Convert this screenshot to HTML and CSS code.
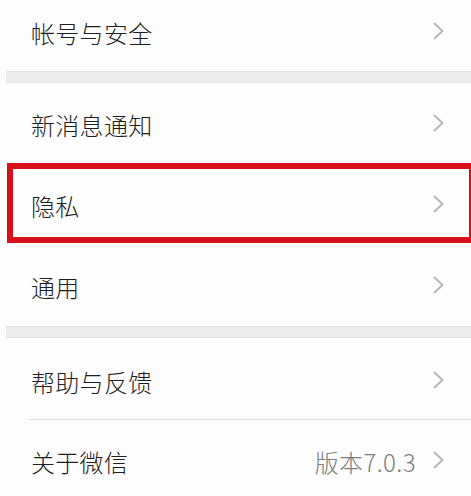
FILE: index.html
```html
<!DOCTYPE html>
<html lang="zh-CN">
<head>
<meta charset="utf-8">
<link rel="stylesheet" href="styles.css">
</head>
<body>
<div class="page">
  <div class="group">
    <div class="row first">
      <span class="label">帐号与安全</span>
      <span class="right"><svg class="chev" viewBox="0 0 11 18"><path d="M1.5 1.5 L9.5 9 L1.5 16.5"/></svg></span>
    </div>
  </div>
  <div class="gap"></div>
  <div class="group">
    <div class="row">
      <span class="label">新消息通知</span>
      <span class="right"><svg class="chev" viewBox="0 0 11 18"><path d="M1.5 1.5 L9.5 9 L1.5 16.5"/></svg></span>
    </div>
    <div class="row highlighted">
      <span class="label">隐私</span>
      <span class="right"><svg class="chev" viewBox="0 0 11 18"><path d="M1.5 1.5 L9.5 9 L1.5 16.5"/></svg></span>
    </div>
    <div class="row">
      <span class="label">通用</span>
      <span class="right"><svg class="chev" viewBox="0 0 11 18"><path d="M1.5 1.5 L9.5 9 L1.5 16.5"/></svg></span>
    </div>
  </div>
  <div class="gap"></div>
  <div class="group">
    <div class="row lower">
      <span class="label">帮助与反馈</span>
      <span class="right"><svg class="chev" viewBox="0 0 11 18"><path d="M1.5 1.5 L9.5 9 L1.5 16.5"/></svg></span>
    </div>
    <div class="divider"></div>
    <div class="row">
      <span class="label">关于微信</span>
      <span class="right"><span class="value">版本7.0.3</span><svg class="chev" viewBox="0 0 11 18"><path d="M1.5 1.5 L9.5 9 L1.5 16.5"/></svg></span>
    </div>
  </div>
</div>
</body>
</html>
```

FILE: styles.css
```css
* { box-sizing: border-box; }
html, body {
  margin: 0;
  padding: 0;
  background: #fdfdfe;
}
body {
  font-family: "Noto Sans CJK SC", "Noto Sans", sans-serif;
  font-weight: 300;
  color: #1e1e1e;
  overflow: hidden;
}
.page {
  padding-left: 6px;
  height: 496px;
  overflow: hidden;
}
.group {
  background: #fdfdfe;
}
.row {
  position: relative;
  height: 81px;
  display: flex;
  align-items: center;
  justify-content: space-between;
  padding: 3px 27px 0 25px;
}
.row.first {
  height: 71px;
  padding-top: 0;
  padding-bottom: 5px;
}
.row.lower {
  padding-top: 6px;
}
.label {
  font-size: 24px;
  letter-spacing: 0.3px;
  line-height: 1;
}
.right {
  display: flex;
  align-items: center;
  gap: 17px;
}
.value {
  font-size: 24px;
  color: #7d7d7d;
  line-height: 1;
  letter-spacing: 0.4px;
}
.chev {
  width: 11px;
  height: 18px;
  margin-top: -4px;
}
.chev path {
  fill: none;
  stroke: #b5b5b5;
  stroke-width: 1.8;
  stroke-linecap: round;
  stroke-linejoin: round;
}
.gap {
  height: 12px;
  background: #ededed;
  border-top: 1px solid #e2e2e2;
  border-bottom: 1px solid #e4e4e4;
}
.divider {
  height: 1px;
  margin-left: 23px;
  background: #dcdcdc;
}
.highlighted::after {
  content: "";
  position: absolute;
  left: 1px;
  right: -4px;
  top: -1px;
  bottom: 2px;
  border: 6px solid #d8101c;
  pointer-events: none;
}
```
